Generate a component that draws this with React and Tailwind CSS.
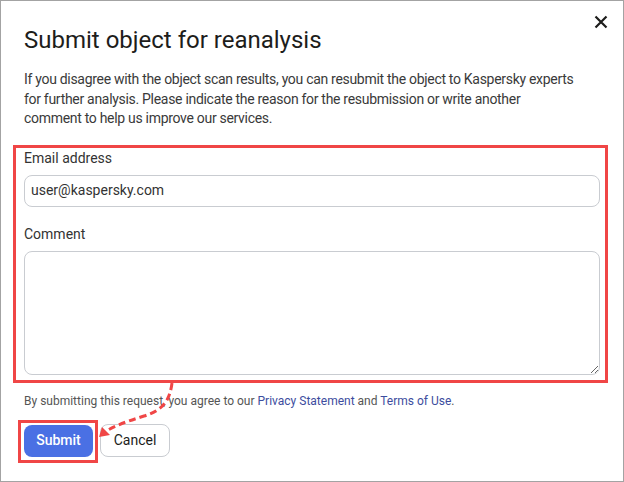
import React from "react";

export default function App() {
  return (
    <div className="relative w-[624px] h-[482px] bg-white border border-[#a3a3a3] overflow-hidden font-['Roboto','Liberation_Sans',sans-serif] text-[#1d1d1b]">
      <div className="flex flex-col pl-[23px] pr-[23px] pt-[23px]">
        <div className="flex items-start justify-between">
          <h1 className="text-[24px] leading-[32px] font-normal text-[#1d1d1b]">
            Submit object for reanalysis
          </h1>
        </div>
        <p className="mt-[14px] text-[14px] leading-[19.5px] tracking-[-0.3px] text-[#3a3a3a]">
          If you disagree with the object scan results, you can resubmit the object to Kaspersky experts
          <br />
          for further analysis. Please indicate the reason for the resubmission or write another
          <br />
          comment to help us improve our services.
        </p>
        <label className="mt-[19px] text-[14px] leading-[20px] text-[#333]">Email address</label>
        <div className="mt-[7px] h-[32px] rounded-[8px] border border-[#c9ccd1] flex items-center px-[6px] text-[14px] text-[#333]">
          user@kaspersky.com
        </div>
        <label className="mt-[17px] text-[14px] leading-[20px] text-[#333]">Comment</label>
        <textarea className="mt-[7px] h-[124px] rounded-[8px] border border-[#c9ccd1] outline-none block w-full" />
        <p className="mt-[18px] text-[12px] leading-[16px] text-[#555]">
          By submitting this request, you agree to our{" "}
          <span className="text-[#3d4d9e]">Privacy Statement</span> and{" "}
          <span className="text-[#3d4d9e]">Terms of Use</span>.
        </p>
        <div className="mt-[16px] flex gap-[7px]">
          <button className="h-[32px] w-[69px] rounded-[8px] bg-[#4a70e4] text-white text-[14px] font-medium">
            Submit
          </button>
          <button className="h-[33px] w-[70px] -mt-px rounded-[8px] bg-white border border-[#c9ccd1] text-[#1d1d1b] text-[14px]">
            Cancel
          </button>
        </div>
      </div>

      <button className="absolute left-[593px] top-[14px] w-[14px] h-[14px] flex items-center justify-center">
        <svg width="14" height="14" viewBox="0 0 14 14">
          <path d="M1.5 1.5 L12.5 12.5 M12.5 1.5 L1.5 12.5" stroke="#1d1d1b" strokeWidth="2.2" strokeLinecap="butt" />
        </svg>
      </button>

      <div className="absolute left-[12px] top-[144px] w-[595px] h-[238px] border-[3px] border-[#f04646] pointer-events-none" />
      <div className="absolute left-[17px] top-[419px] w-[80px] h-[43px] border-[3px] border-[#f04646] pointer-events-none" />

      <svg className="absolute left-0 top-0 pointer-events-none" width="624" height="482" viewBox="0 0 624 482">
        <path
          d="M171 382 C 169 398, 163 409, 143 415 C 124 421, 113 425, 104 431"
          fill="none"
          stroke="#f04646"
          strokeWidth="3"
          strokeDasharray="7 4"
        />
        <polygon points="98,436 101,426 109,434" fill="#f04646" />
      </svg>
    </div>
  );
}
